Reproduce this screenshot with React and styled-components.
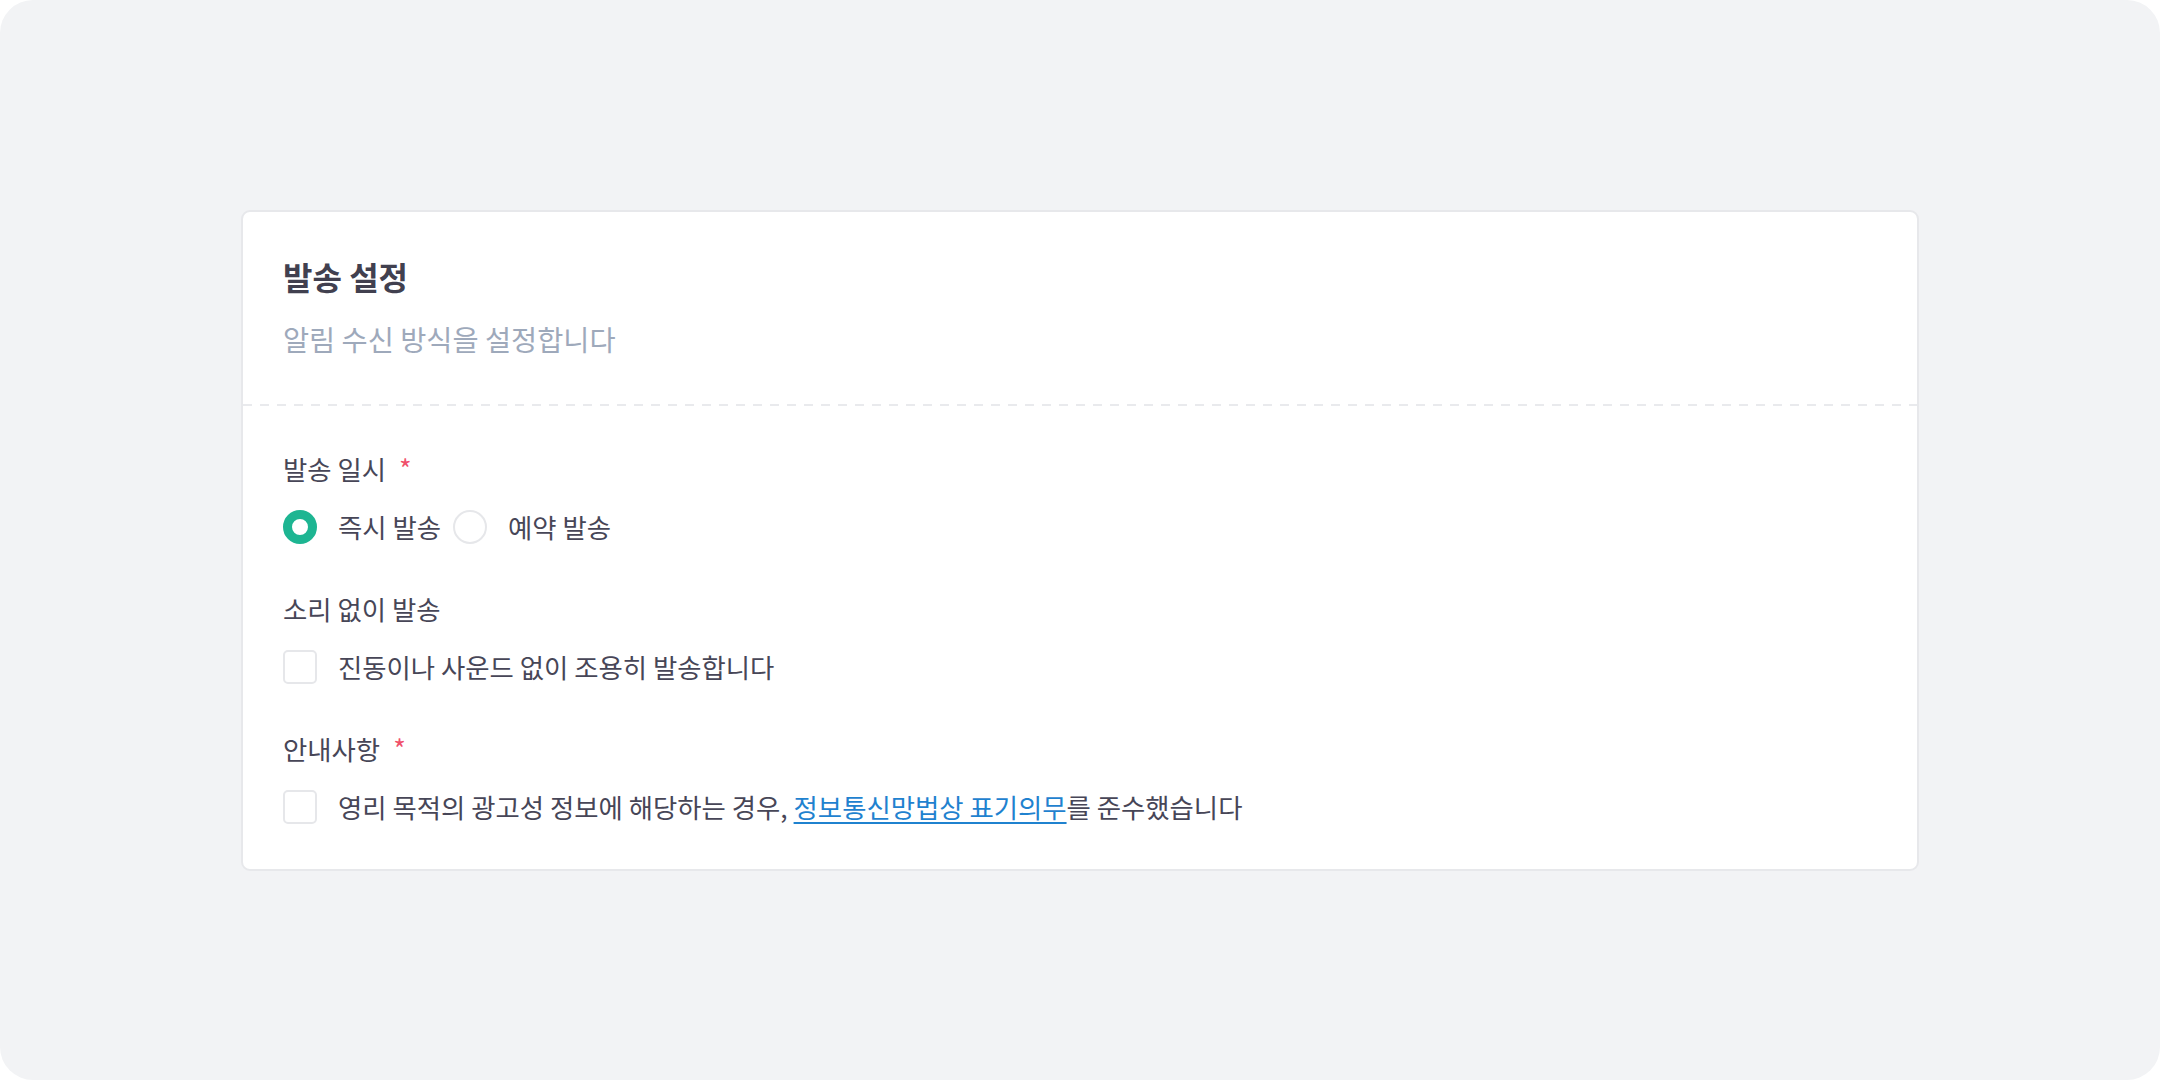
import React, { useState } from "react";
import styled, { createGlobalStyle } from "styled-components";

const GlobalStyle = createGlobalStyle`
  html, body { margin: 0; padding: 0; background: #ffffff; }
  body { font-family: "Noto Sans CJK KR", "Noto Sans", sans-serif; }
  * { box-sizing: border-box; }
`;

const Page = styled.div`
  width: 2160px;
  height: 1080px;
  background: #f2f3f5;
  border-radius: 33px;
  display: flex;
  align-items: center;
  justify-content: center;
`;

const Card = styled.section`
  width: 1678px;
  background: #ffffff;
  border: 2px solid #e7e8eb;
  border-radius: 9px;
  display: flex;
  flex-direction: column;
`;

const Header = styled.header`
  padding: 42px 40px 46px;
  display: flex;
  flex-direction: column;
  gap: 22px;
`;

const Title = styled.h2`
  margin: 0;
  font-size: 32px;
  line-height: 44px;
  font-weight: 700;
  color: #41404f;
`;

const Subtitle = styled.p`
  margin: 0;
  font-size: 28.4px;
  line-height: 38px;
  color: #9ea9bb;
`;

const Divider = styled.div`
  height: 2px;
  background-image: repeating-linear-gradient(
    to right,
    #e9eaed 0 9px,
    transparent 9px 17px
  );
`;

const Body = styled.div`
  padding: 45px 40px 44px;
  display: flex;
  flex-direction: column;
  gap: 46px;
`;

const Field = styled.div`
  display: flex;
  flex-direction: column;
  gap: 22px;
`;

const Label = styled.div`
  display: flex;
  align-items: center;
  font-size: 26.4px;
  line-height: 36px;
  color: #474657;
`;

const Required = styled.span`
  color: #f0506b;
  margin-left: 13px;
  font-size: 27px;
`;

const Options = styled.div`
  display: flex;
  align-items: center;
  gap: 12px;
`;

const OptionLabel = styled.label`
  display: flex;
  align-items: center;
  gap: 21px;
  font-size: 26.4px;
  line-height: 36px;
  color: #474657;
  cursor: pointer;
`;

const RadioDot = styled.span`
  width: 34px;
  height: 34px;
  border-radius: 50%;
  flex-shrink: 0;
  background: #ffffff;
  border: ${(p) => (p.$checked ? "9px solid #1db592" : "2px solid #e6e7ea")};
`;

const CheckBox = styled.span`
  width: 34px;
  height: 34px;
  border-radius: 5px;
  flex-shrink: 0;
  background: #ffffff;
  border: 2px solid #e6e7ea;
`;

const Link = styled.a`
  color: #1f82cf;
  text-decoration: underline;
  text-underline-offset: 4px;
  text-decoration-thickness: 2px;
`;

export default function App() {
  const [mode, setMode] = useState("now");
  return (
    <>
      <GlobalStyle />
      <Page>
        <Card>
          <Header>
            <Title>발송 설정</Title>
            <Subtitle>알림 수신 방식을 설정합니다</Subtitle>
          </Header>
          <Divider />
          <Body>
            <Field>
              <Label>
                발송 일시<Required>*</Required>
              </Label>
              <Options>
                <OptionLabel onClick={() => setMode("now")}>
                  <RadioDot $checked={mode === "now"} />
                  즉시 발송
                </OptionLabel>
                <OptionLabel onClick={() => setMode("later")}>
                  <RadioDot $checked={mode === "later"} />
                  예약 발송
                </OptionLabel>
              </Options>
            </Field>
            <Field>
              <Label>소리 없이 발송</Label>
              <OptionLabel>
                <CheckBox />
                진동이나 사운드 없이 조용히 발송합니다
              </OptionLabel>
            </Field>
            <Field>
              <Label>
                안내사항<Required>*</Required>
              </Label>
              <OptionLabel>
                <CheckBox />
                <span>
                  영리 목적의 광고성 정보에 해당하는 경우,{" "}
                  <Link href="#">정보통신망법상 표기의무</Link>를 준수했습니다
                </span>
              </OptionLabel>
            </Field>
          </Body>
        </Card>
      </Page>
    </>
  );
}
